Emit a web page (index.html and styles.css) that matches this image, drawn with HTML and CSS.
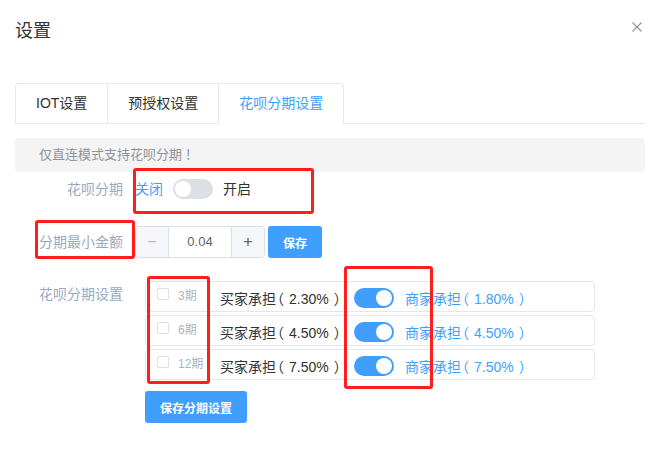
FILE: index.html
```html
<!DOCTYPE html>
<html lang="zh-CN">
<head>
<meta charset="utf-8">
<title>设置</title>
<link rel="stylesheet" href="styles.css">
</head>
<body>
<div class="dialog">
  <div class="header">
    <span class="title">设置</span>
    <span class="close" aria-label="关闭">
      <svg width="10" height="10" viewBox="0 0 10 10"><path d="M0.5 0.5 L9.5 9.5 M9.5 0.5 L0.5 9.5" stroke="#909399" stroke-width="1.1" fill="none"/></svg>
    </span>
  </div>
  <div class="body">
    <div class="tabs">
      <div class="nav">
        <div class="tab">IOT设置</div>
        <div class="tab">预授权设置</div>
        <div class="tab active">花呗分期设置</div>
      </div>
    </div>
    <div class="alert"><span class="alert-text">仅直连模式支持花呗分期<span class="excl">！</span></span></div>
    <div class="form">
      <div class="item item-switch">
        <div class="label">花呗分期</div>
        <div class="content">
          <span class="sw-text sw-left">关闭</span>
          <span class="switch"><span class="knob"></span></span>
          <span class="sw-text sw-right">开启</span>
        </div>
      </div>
      <div class="item item-amount">
        <div class="label">分期最小金额</div>
        <div class="content">
          <div class="number">
            <span class="num-btn minus">−</span>
            <span class="num-value">0.04</span>
            <span class="num-btn plus">+</span>
          </div>
          <button class="btn save">保存</button>
        </div>
      </div>
      <div class="item item-rows">
        <div class="label">花呗分期设置</div>
        <div class="content rows-wrap">
          <div class="rows">
            <div class="row">
              <div class="period"><span class="checkbox"></span><span class="period-text">3期</span></div>
              <div class="buyer">买家承担<span class="lp">（</span>2.30%<span class="rp">）</span></div>
              <span class="switch on"><span class="knob"></span></span>
              <div class="seller">商家承担<span class="lp">（</span>1.80%<span class="rp">）</span></div>
            </div>
            <div class="row">
              <div class="period"><span class="checkbox"></span><span class="period-text">6期</span></div>
              <div class="buyer">买家承担<span class="lp">（</span>4.50%<span class="rp">）</span></div>
              <span class="switch on"><span class="knob"></span></span>
              <div class="seller">商家承担<span class="lp">（</span>4.50%<span class="rp">）</span></div>
            </div>
            <div class="row">
              <div class="period"><span class="checkbox"></span><span class="period-text">12期</span></div>
              <div class="buyer">买家承担<span class="lp">（</span>7.50%<span class="rp">）</span></div>
              <span class="switch on"><span class="knob"></span></span>
              <div class="seller">商家承担<span class="lp">（</span>7.50%<span class="rp">）</span></div>
            </div>
          </div>
          <button class="btn save-all">保存分期设置</button>
        </div>
      </div>
    </div>
  </div>
  <div class="mark mark-1"></div>
  <div class="mark mark-2"></div>
  <div class="mark mark-3"></div>
  <div class="mark mark-4"></div>
</div>
</body>
</html>
```
FILE: styles.css
```css
html, body {
  margin: 0;
  padding: 0;
  background: #fff;
}
body {
  font-family: "Liberation Sans", "Noto Sans CJK SC", sans-serif;
  color: #303133;
}
.dialog {
  position: relative;
  width: 662px;
  height: 471px;
  overflow: hidden;
}
.header {
  display: flex;
  justify-content: space-between;
  align-items: flex-start;
  padding: 19px 20px 11px 15px;
  height: 24px;
}
.title {
  font-size: 18px;
  line-height: 24px;
  color: #303133;
}
.close {
  display: block;
  width: 10px;
  height: 10px;
  margin-top: 3px;
}
.close svg { display: block; }
.body {
  padding: 29px 17px 0 15px;
}
.tabs {
  display: flex;
  border-bottom: 1px solid #e4e7ed;
  margin-bottom: 14px;
}
.nav {
  display: flex;
  border: 1px solid #e4e7ed;
  border-bottom: none;
  border-radius: 4px 4px 0 0;
  margin-bottom: -1px;
}
.tab {
  height: 40px;
  box-sizing: border-box;
  line-height: 39px;
  padding: 0 20px;
  font-size: 14px;
  color: #303133;
  border-left: 1px solid #e4e7ed;
  border-bottom: 1px solid transparent;
}
.tab:first-child { border-left: none; }
.tab.active {
  color: #409eff;
  border-bottom-color: #fff;
}
.alert {
  background: #f4f4f5;
  border-radius: 4px;
  padding: 8px 16px;
}
.alert-text {
  display: block;
  padding: 0 8px;
  font-size: 13px;
  line-height: 18px;
  color: #909399;
}
.excl {
  margin-left: 3px;
}
.form {
  padding-top: 1px;
}
.item {
  display: flex;
  align-items: flex-start;
}
.item-amount { margin-top: 21px; }
.item-rows { margin-top: 20px; }
.label {
  width: 120px;
  box-sizing: border-box;
  padding-right: 12px;
  text-align: right;
  font-size: 14px;
  line-height: 32px;
  color: #99a9bf;
  flex: none;
}
.content {
  display: flex;
  align-items: center;
  min-height: 32px;
}
.sw-text {
  font-size: 14px;
  line-height: 32px;
}
.sw-left { color: #409eff; margin-right: 10px; }
.sw-right { color: #303133; margin-left: 10px; }
.switch {
  position: relative;
  display: inline-block;
  width: 40px;
  height: 20px;
  border-radius: 10px;
  background: #dcdfe6;
  flex: none;
}
.switch .knob {
  position: absolute;
  top: 2px;
  left: 2px;
  width: 16px;
  height: 16px;
  border-radius: 50%;
  background: #fff;
}
.switch.on { background: #409eff; }
.switch.on .knob { left: 22px; }
.number {
  display: flex;
  width: 130px;
  height: 32px;
  box-sizing: border-box;
  border: 1px solid #dcdfe6;
  border-radius: 4px;
  overflow: hidden;
}
.num-btn {
  width: 32px;
  flex: none;
  background: #f5f7fa;
  text-align: center;
  line-height: 30px;
  font-size: 16px;
  color: #606266;
}
.num-btn.minus { border-right: 1px solid #dcdfe6; color: #b4b7bd; }
.num-btn.plus { border-left: 1px solid #dcdfe6; }
.num-value {
  flex: 1;
  text-align: center;
  font-size: 13px;
  line-height: 30px;
  color: #606266;
}
.btn {
  border: none;
  background: #409eff;
  color: #fff;
  font-family: inherit;
  font-size: 12px;
  font-weight: 700;
  height: 32px;
  padding: 0 15px;
  border-radius: 3px;
  cursor: pointer;
}
.save { margin-left: 3px; }
.rows-wrap {
  flex-direction: column;
  align-items: flex-start;
  padding-top: 3px;
  margin-left: 10px;
}
.rows {
  display: flex;
  flex-direction: column;
  gap: 3px;
}
.row {
  display: flex;
  align-items: center;
  width: 450px;
  height: 31px;
  box-sizing: border-box;
  border: 1px solid #e4e7ed;
  border-radius: 4px;
  padding-left: 11px;
  padding-top: 2px;
}
.period {
  display: flex;
  align-items: center;
  width: 63px;
  flex: none;
  margin-bottom: 7px;
}
.checkbox {
  width: 12px;
  height: 12px;
  box-sizing: border-box;
  border: 1px solid #dcdfe6;
  border-radius: 2px;
  background: #fff;
  margin-right: 9px;
}
.period-text {
  font-size: 12px;
  color: #aab3c2;
}
.buyer, .seller {
  font-size: 14px;
  white-space: nowrap;
}
.lp, .rp {
  font-feature-settings: "halt";
}
.lp {
  margin-left: 1px;
  margin-right: 5px;
}
.rp {
  margin-left: 5px;
}
.buyer {
  width: 134px;
  flex: none;
  color: #303133;
}
.seller {
  margin-left: 11px;
  color: #409eff;
}
.save-all {
  margin-top: 11px;
}
.mark {
  position: absolute;
  border: 3px solid #ff1e1e;
  border-radius: 3px;
  box-sizing: border-box;
}
.mark-1 { left: 133px; top: 168px; width: 181px; height: 46px; }
.mark-2 { left: 35px; top: 220px; width: 100px; height: 39px; }
.mark-3 { left: 147px; top: 276px; width: 63px; height: 108px; }
.mark-4 { left: 344px; top: 266px; width: 89px; height: 123px; }
```
